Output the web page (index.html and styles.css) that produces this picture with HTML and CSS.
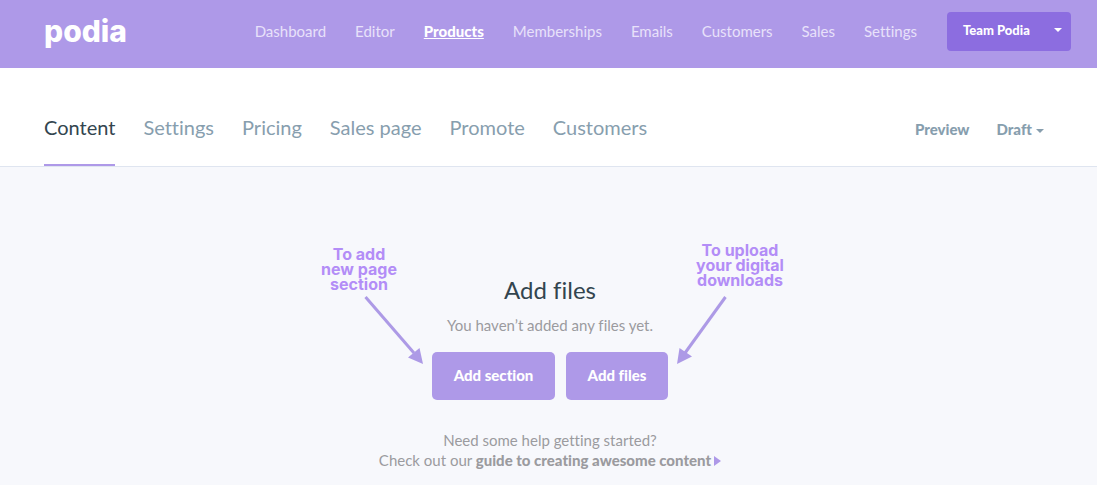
FILE: index.html
```html
<!DOCTYPE html>
<html lang="en">
<head>
<meta charset="utf-8">
<title>Podia – Products</title>
<link rel="stylesheet" href="styles.css">
</head>
<body>
<header class="topbar">
  <a class="logo" href="#">podia</a>
  <nav class="mainnav">
    <a href="#">Dashboard</a>
    <a href="#">Editor</a>
    <a class="current" href="#">Products</a>
    <a href="#">Memberships</a>
    <a href="#">Emails</a>
    <a href="#">Customers</a>
    <a href="#">Sales</a>
    <a href="#">Settings</a>
  </nav>
  <button class="team" type="button">Team Podia <svg width="8" height="4" viewBox="0 0 8 4"><path d="M0 0h8L4 4z" fill="currentColor"/></svg></button>
</header>
<div class="subbar">
  <nav class="tabs">
    <a class="active" href="#">Content</a>
    <a href="#">Settings</a>
    <a href="#">Pricing</a>
    <a href="#">Sales page</a>
    <a href="#">Promote</a>
    <a href="#">Customers</a>
  </nav>
  <div class="actions">
    <a href="#">Preview</a>
    <button type="button">Draft <svg width="8" height="4" viewBox="0 0 8 4"><path d="M0 0h8L4 4z" fill="currentColor"/></svg></button>
  </div>
</div>
<main class="content">
  <div class="stage">
    <aside class="note note-left">
      <p>To add<br>new page<br>section</p>
      <svg width="60" height="68" viewBox="0 0 60 68"><path d="M1.500 1L50 57" stroke="#ad9ae6" stroke-width="3" fill="none"/><path d="M59 68L44 61.500L55.500 52z" fill="#ad9ae6"/></svg>
    </aside>
    <section class="empty">
      <h1>Add files</h1>
      <p>You haven’t added any files yet.</p>
      <div class="buttons">
        <button type="button" class="section">Add section</button>
        <button type="button">Add files</button>
      </div>
    </section>
    <aside class="note note-right">
      <p>To upload<br>your digital<br>downloads</p>
      <svg width="50" height="68" viewBox="0 0 50 68"><path d="M48.500 1L8 57" stroke="#ad9ae6" stroke-width="3" fill="none"/><path d="M0 68L2.500 52L15 60.500z" fill="#ad9ae6"/></svg>
    </aside>
  </div>
  <p class="help">Need some help getting started?<br>Check out our <a href="#">guide to creating awesome content<svg width="8" height="10" viewBox="0 0 8 10"><path d="M1 0l7 5l-7 5z" fill="#ae99e8"/></svg></a></p>
</main>
</body>
</html>
```
FILE: styles.css
```css
* { box-sizing: border-box; }
body {
  margin: 0;
  min-height: 100vh;
  background: #f7f8fc;
  color: #33454f;
  font-family: Lato, "Liberation Sans", sans-serif;
  font-size: 15px;
  font-variant-ligatures: none;
  line-height: 20px;
}
a { color: inherit; text-decoration: none; }
button { font: inherit; border: 0; cursor: pointer; }
h1, p { margin: 0; }

.topbar {
  display: flex;
  align-items: center;
  height: 68px;
  padding: 0 26px 6px 44px;
  background: #ae99e8;
  color: #fff;
}
.logo { font: 800 30px/40px Inter, Lato, sans-serif; }
.mainnav { display: flex; gap: 29px; margin: 0 30px 0 auto; color: #e8e1fa; }
.mainnav .current { color: #fff; font-weight: 900; text-decoration: underline; }
.team {
  display: flex;
  align-items: center;
  justify-content: space-between;
  width: 124px;
  height: 39px;
  padding: 0 9px 3px 16px;
  border-radius: 4px;
  background: #8c6de0;
  color: #fff;
  font-size: 13px;
  font-weight: 900;
}

.subbar {
  display: flex;
  justify-content: space-between;
  height: 99px;
  padding: 0 53px 0 44px;
  background: #fff;
  border-bottom: 1px solid #dfe5f0;
  color: #879eae;
}
.tabs { display: flex; gap: 28px; font-size: 20px; line-height: 24px; }
.tabs a { padding-top: 47px; border-bottom: 2px solid transparent; }
.tabs .active { color: #33454f; border-color: #ae99e8; }
.actions { display: flex; gap: 27px; padding-top: 51px; align-items: flex-start; font-weight: 900; }
.actions button { display: flex; align-items: center; gap: 4px; padding: 0; background: none; color: inherit; }
.actions svg { margin-top: 3px; }

.content { padding: 76px 0 16px 3px; }
.stage { display: grid; grid-template-columns: 1fr 236px 1fr; column-gap: 8px; }
.note {
  display: flex;
  flex-direction: column;
  color: #b38df7;
  font: 700 16px/15px Inter, "Liberation Sans", sans-serif;
  text-align: center;
  white-space: nowrap;
}
.note p { width: 90px; }
.note-left { justify-self: end; width: 110px; padding-top: 4px; }
.note-left svg { align-self: flex-end; margin-top: 4px; }
.note-right { width: 110px; padding-left: 19px; }
.note-right svg { margin: 8px 0 0 -18px; }
.empty { padding-top: 32px; text-align: center; color: #9b9b9f; }
.empty h1 { color: #33454f; font-size: 24px; font-weight: 400; line-height: 30px; }
.empty p { margin-top: 10px; }
.buttons { display: flex; gap: 11px; margin-top: 17px; }
.buttons button {
  flex: 1;
  height: 48px;
  padding: 0 0 2px;
  border-radius: 5px;
  background: #ae99e8;
  color: #fff;
  font-weight: 900;
}
.buttons .section { flex: 0 0 123px; }
.help { margin-top: 30px; color: #9b9b9f; text-align: center; }
.help a { font-weight: 900; }
.help svg { margin-left: 2px; }
```
